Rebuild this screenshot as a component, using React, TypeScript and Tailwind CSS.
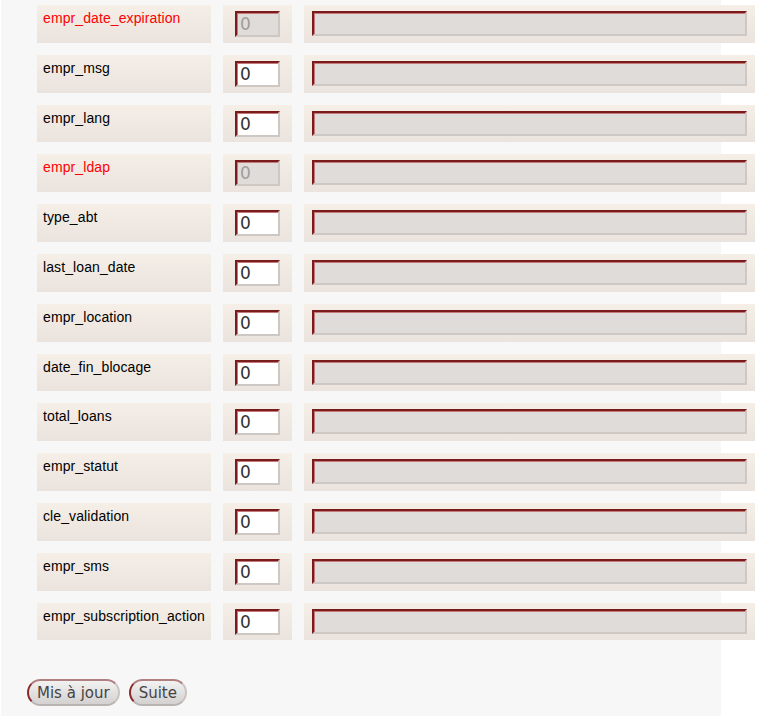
import React from 'react';

type Field = { name: string; locked?: boolean };

const fields: Field[] = [
  { name: 'empr_date_expiration', locked: true },
  { name: 'empr_msg' },
  { name: 'empr_lang' },
  { name: 'empr_ldap', locked: true },
  { name: 'type_abt' },
  { name: 'last_loan_date' },
  { name: 'empr_location' },
  { name: 'date_fin_blocage' },
  { name: 'total_loans' },
  { name: 'empr_statut' },
  { name: 'cle_validation' },
  { name: 'empr_sms' },
  { name: 'empr_subscription_action' },
];

const cell = 'shrink-0 h-[37.8px] bg-gradient-to-b from-[#f5efe8] to-[#ebe3dd]';
const inset =
  'block border-2 border-t-[#7b1c1c] border-l-[#7b1c1c] border-r-[#cdc8c4] border-b-[#cdc8c4] shadow-[inset_1px_1px_0_#c47a7a] outline-none';

const Row = ({ field }: { field: Field }) => (
  <div className="flex w-max gap-3">
    <div className={`${cell} w-[174px] px-[6px] pt-[0px]`}>
      <span
        className={`text-[14px] leading-[17px] tracking-[0.1px] ${field.locked ? 'text-[#ff0000]' : 'text-black'}`}
        style={{ fontFamily: '"Liberation Sans", Arial, sans-serif' }}
      >
        {field.name}
      </span>
    </div>
    <div className={`${cell} w-[69px] pl-[12px] pt-[6px]`}>
      <input
        type="text"
        defaultValue="0"
        disabled={field.locked}
        className={`${inset} h-[26px] w-[45px] px-[3px] text-[17px] ${
          field.locked ? 'bg-[#e0dcd9] text-[#a09c9a]' : 'bg-white text-[#333]'
        }`}
        style={{ fontFamily: '"DejaVu Sans", sans-serif' }}
      />
    </div>
    <div className={`${cell} w-[451px] pl-[8px] pt-[6px]`}>
      <div className={`${inset} h-[25px] w-[435px] bg-[#e0dcd9]`} />
    </div>
  </div>
);

export default function App() {
  return (
    <div className="min-h-screen overflow-hidden bg-white">
      <div className="ml-[1px] min-h-[716px] w-[720px] bg-[#f7f7f7] pl-[36px] pt-[5px]">
        <div className="flex flex-col gap-3">
          {fields.map((f) => (
            <Row key={f.name} field={f} />
          ))}
        </div>
        <div className="-ml-[10px] mt-[39px] flex gap-[9px]">
          {['Mis à jour', 'Suite'].map((label) => (
            <button
              key={label}
              className="h-[27px] rounded-full border-2 border-b-[#b8b4b2] border-l-[#8a2a2a] border-r-[#c8c4c2] border-t-[#b08080] bg-gradient-to-b from-[#f2f2f2] to-[#d4d2d0] px-[8px] text-[15px] leading-[20px] text-[#444]"
              style={{ fontFamily: '"DejaVu Sans", sans-serif' }}
            >
              {label}
            </button>
          ))}
        </div>
      </div>
    </div>
  );
}
